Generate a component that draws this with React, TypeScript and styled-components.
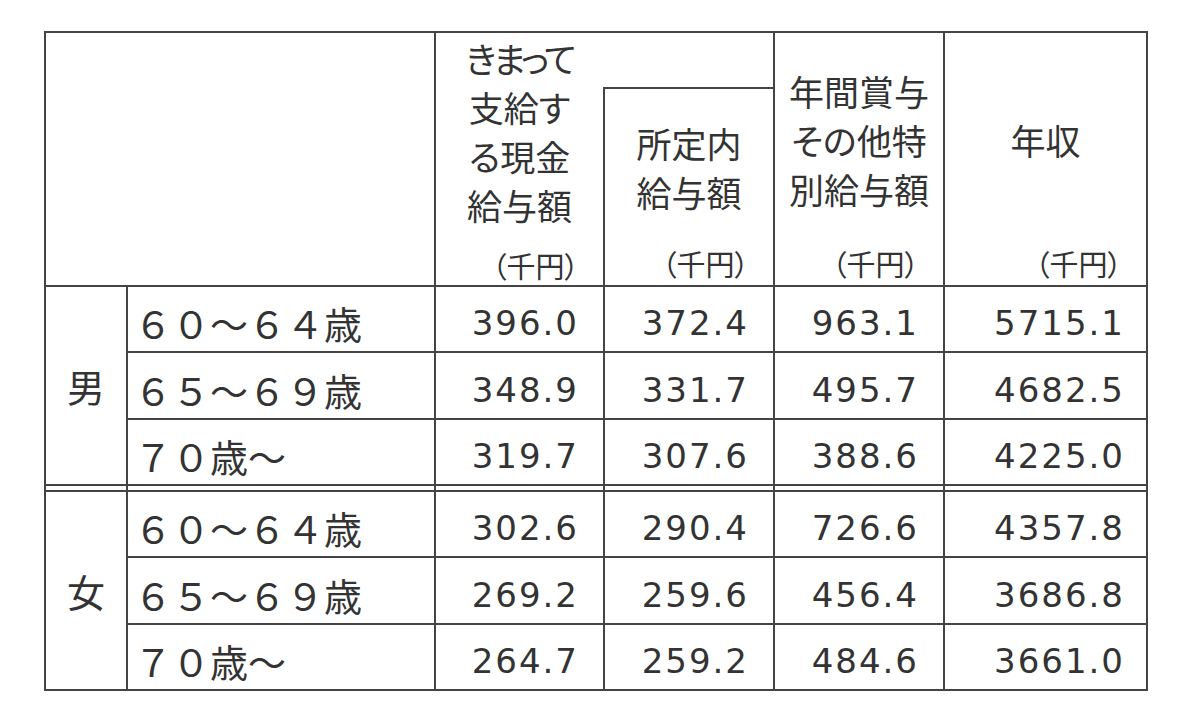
import React from 'react';
import styled, { createGlobalStyle } from 'styled-components';

type Row = { age: string; values: string[] };
type Group = { sex: string; rows: Row[] };

const groups: Group[] = [
  {
    sex: '男',
    rows: [
      { age: '６０～６４歳', values: ['396.0', '372.4', '963.1', '5715.1'] },
      { age: '６５～６９歳', values: ['348.9', '331.7', '495.7', '4682.5'] },
      { age: '７０歳～', values: ['319.7', '307.6', '388.6', '4225.0'] }
    ]
  },
  {
    sex: '女',
    rows: [
      { age: '６０～６４歳', values: ['302.6', '290.4', '726.6', '4357.8'] },
      { age: '６５～６９歳', values: ['269.2', '259.6', '456.4', '3686.8'] },
      { age: '７０歳～', values: ['264.7', '259.2', '484.6', '3661.0'] }
    ]
  }
];

const colWidths = [82, 308, 169, 170, 170, 203];

const LINE = '2px solid #444';
const JP = '"Noto Sans CJK JP", "Noto Sans", sans-serif';

function App() {
  return (
    <Page>
      <GlobalStyle />
      <Table>
        <colgroup>
          {colWidths.map((w, i) => (
            <Col key={i} $w={w} />
          ))}
        </colgroup>
        <thead>
          <HeadRow $h={56}>
            <Corner colSpan={2} rowSpan={2} />
            <HeadCell rowSpan={2} $openRight>
              <HeadInner $h={252}>
                <Label $lift={18}>
                  <LabelText>
                    <Kana>きまって</Kana>
                    <br />
                    支給す
                    <br />
                    る現金
                    <br />
                    給与額
                  </LabelText>
                </Label>
                <Unit>（千円）</Unit>
              </HeadInner>
            </HeadCell>
            <EmptyTop />
            <HeadCell rowSpan={2}>
              <HeadInner $h={252}>
                <Label>
                  <LabelText>
                    年間賞与
                    <br />
                    その他特
                    <br />
                    別給与額
                  </LabelText>
                </Label>
                <Unit>（千円）</Unit>
              </HeadInner>
            </HeadCell>
            <HeadCell rowSpan={2}>
              <HeadInner $h={252}>
                <Label>
                  <LabelText>年収</LabelText>
                </Label>
                <Unit>（千円）</Unit>
              </HeadInner>
            </HeadCell>
          </HeadRow>
          <HeadRow $h={198}>
            <HeadCell>
              <HeadInner $h={196}>
                <Label>
                  <LabelText>
                    所定内
                    <br />
                    給与額
                  </LabelText>
                </Label>
                <Unit>（千円）</Unit>
              </HeadInner>
            </HeadCell>
          </HeadRow>
        </thead>
        <tbody>
          {groups.map((g, gi) => (
            <React.Fragment key={g.sex}>
              {gi > 0 && (
                <SpacerRow>
                  {colWidths.map((_, i) => (
                    <SpacerCell key={i} />
                  ))}
                </SpacerRow>
              )}
              {g.rows.map((r, ri) => (
                <BodyRow key={r.age} $h={ri === 1 ? 67 : 66}>
                  {ri === 0 && <SexCell rowSpan={g.rows.length}>{g.sex}</SexCell>}
                  <AgeCell>{r.age}</AgeCell>
                  {r.values.map((v, vi) => (
                    <NumCell key={vi}>{v}</NumCell>
                  ))}
                </BodyRow>
              ))}
            </React.Fragment>
          ))}
        </tbody>
      </Table>
    </Page>
  );
}

const GlobalStyle = createGlobalStyle`
  html, body {
    margin: 0;
    padding: 0;
    background: #fff;
  }
  body {
    width: 1200px;
    height: 712px;
    overflow: hidden;
  }
`;

const Page = styled.main`
  padding: 31px 0 0 44px;
  color: #333;
`;

const Table = styled.table`
  border-collapse: collapse;
  table-layout: fixed;
  width: 1103px;
  border: ${LINE};
`;

const Col = styled.col<{ $w: number }>`
  width: ${(p) => p.$w}px;
`;

const HeadRow = styled.tr<{ $h: number }>`
  height: ${(p) => p.$h}px;
`;

const Corner = styled.th`
  border: ${LINE};
  padding: 0;
`;

const HeadCell = styled.th<{ $openRight?: boolean }>`
  border: ${LINE};
  border-right: ${(p) => (p.$openRight ? 'none' : LINE)};
  padding: 0;
  vertical-align: top;
  font-weight: normal;
`;

const EmptyTop = styled.th`
  border: ${LINE};
  border-left: none;
  padding: 0;
`;

const HeadInner = styled.div<{ $h: number }>`
  height: ${(p) => p.$h}px;
  display: flex;
  flex-direction: column;
`;

const Label = styled.div<{ $lift?: number }>`
  flex: 1;
  display: flex;
  align-items: center;
  justify-content: center;
  margin-bottom: ${(p) => p.$lift ?? 0}px;
`;

const LabelText = styled.div`
  text-align: center;
  font-family: ${JP};
  font-feature-settings: 'palt';
  font-size: 35px;
  line-height: 49px;
  white-space: nowrap;
`;

const Kana = styled.span`
  letter-spacing: -3px;
`;

const Unit = styled.div`
  text-align: right;
  padding: 0 24px 4px 0;
  font-family: ${JP};
  font-feature-settings: 'palt';
  font-size: 29px;
  line-height: 36px;
`;

const BodyRow = styled.tr<{ $h: number }>`
  height: ${(p) => p.$h}px;
`;

const SpacerRow = styled.tr`
  height: 6px;
`;

const SpacerCell = styled.td`
  border: ${LINE};
  padding: 0;
  height: 4px;
  line-height: 0;
  font-size: 0;
`;

const SexCell = styled.td`
  border: ${LINE};
  text-align: center;
  vertical-align: middle;
  font-family: ${JP};
  font-size: 38px;
  padding: 0;
`;

const AgeCell = styled.td`
  border: ${LINE};
  padding: 8px 0 0 6px;
  font-family: ${JP};
  font-size: 38px;
  line-height: 44px;
  white-space: nowrap;
`;

const NumCell = styled.td`
  border: ${LINE};
  padding: 8px 24px 0 0;
  text-align: right;
  font-family: 'DejaVu Sans', 'Liberation Sans', sans-serif;
  font-size: 34px;
  letter-spacing: 2px;
  line-height: 44px;
  &:last-child {
    padding-right: 21px;
  }
`;

export default App;
